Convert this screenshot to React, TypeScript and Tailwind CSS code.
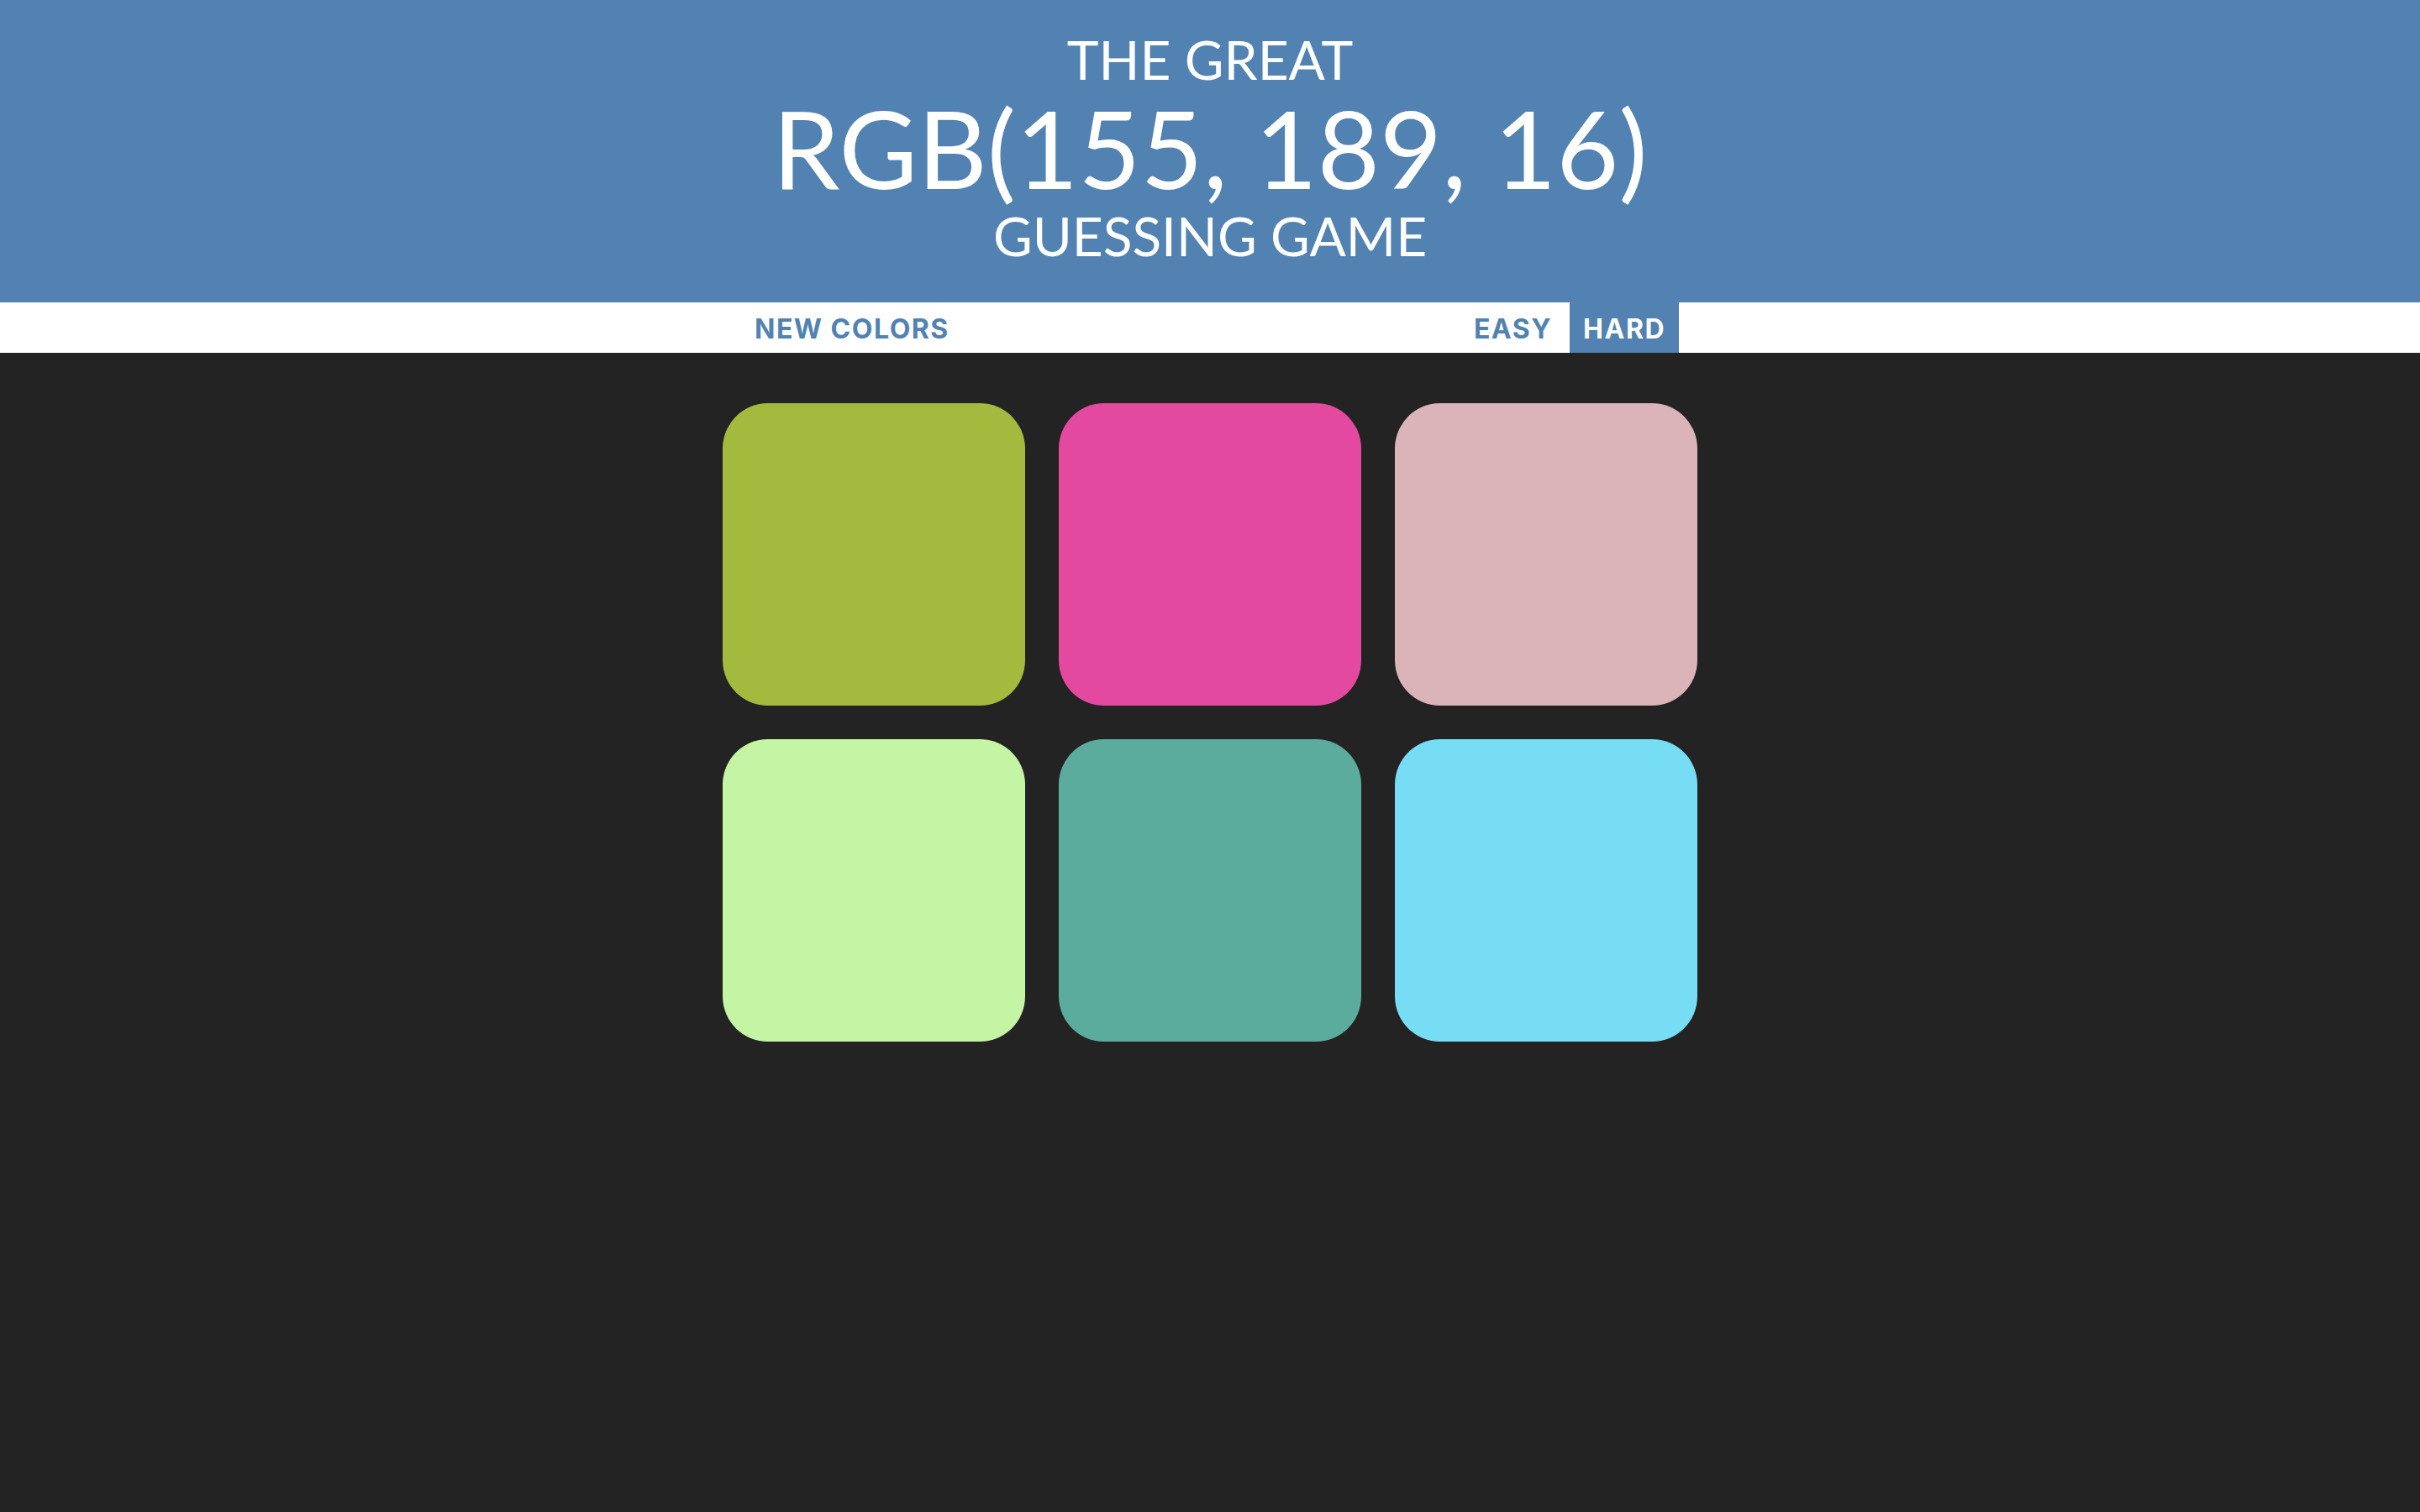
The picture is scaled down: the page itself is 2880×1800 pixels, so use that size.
import React from "react";

const colors = [
  "rgb(163, 186, 63)",
  "rgb(228, 73, 160)",
  "rgb(218, 180, 185)",
  "rgb(196, 245, 164)",
  "rgb(92, 172, 157)",
  "rgb(119, 221, 245)",
];

export default function App() {
  return (
    <div className="min-h-screen bg-[#232323]" style={{ fontFamily: "Lato, 'Noto Sans', sans-serif" }}>
      <h1 className="bg-[#5182b1] text-white text-center uppercase font-normal pt-[36px] pb-[42px] leading-[1.1] text-[64px]">
        <span className="block h-[70px]">The Great</span>
        <span className="block h-[140px] text-[128px]">RGB(155, 189, 16)</span>
        <span className="block h-[72px]">Guessing Game</span>
      </h1>
      <div className="bg-white h-[60px]">
        <div className="w-[1200px] h-full mx-auto flex items-stretch" style={{ fontFamily: "Inter, 'Liberation Sans', sans-serif" }}>
          <button className="ml-[40px] px-[18px] pt-[3px] text-[#5182b1] font-bold text-[32px] tracking-[1.5px] uppercase">New Colors</button>
          <div className="flex-1" />
          <button className="px-[16px] pt-[3px] text-[#5182b1] font-bold text-[32px] tracking-[1.5px] uppercase">Easy</button>
          <button className="ml-[5px] mr-[42px] px-[16px] pt-[3px] bg-[#5182b1] text-white font-bold text-[32px] tracking-[1.5px] uppercase">Hard</button>
        </div>
      </div>
      <div className="w-[1200px] mx-auto mt-[40px] px-[20px] pt-[20px] grid grid-cols-3 gap-[40px]">
        {colors.map((c) => (
          <div key={c} className="w-[360px] h-[360px] rounded-[54px]" style={{ backgroundColor: c }} />
        ))}
      </div>
    </div>
  );
}
